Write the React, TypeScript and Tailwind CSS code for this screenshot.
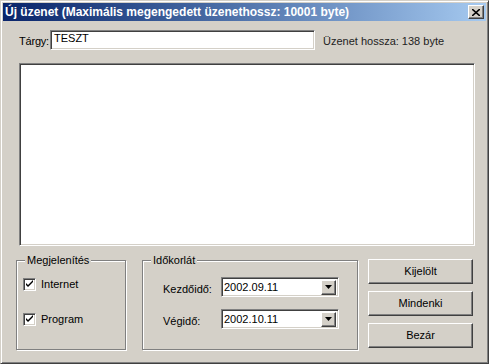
import React from "react";

const raised =
  "bg-[#d4d0c8] border border-t-white border-l-white border-r-[#404040] border-b-[#404040] shadow-[inset_-1px_-1px_0_#808080]";
const sunken =
  "bg-white border border-t-[#808080] border-l-[#808080] border-r-white border-b-white shadow-[inset_1px_1px_0_#404040,inset_-1px_-1px_0_#d4d0c8]";

function Check() {
  return (
    <div className={`w-[13px] h-[13px] ${sunken} flex items-center justify-center`}>
      <svg width="9" height="9" viewBox="0 0 9 9" className="block">
        <path d="M1 3 L1 5 L3 7 L8 2 L8 0 L3 5 Z" fill="#000" />
      </svg>
    </div>
  );
}

function Combo({ value }: { value: string }) {
  return (
    <div className={`w-[118px] h-[20px] ${sunken} flex items-center pl-[2px] pr-[2px]`}>
      <span className="flex-1 text-[11px] leading-[13px]">{value}</span>
      <div className={`w-[15px] h-[15px] ${raised} flex items-center justify-center`}>
        <svg width="7" height="4" viewBox="0 0 7 4" className="block">
          <path d="M0 0 H7 L3.5 4 Z" fill="#000" />
        </svg>
      </div>
    </div>
  );
}

function GroupBox({
  title,
  className,
  children,
}: {
  title: string;
  className: string;
  children: React.ReactNode;
}) {
  return (
    <div
      className={`relative border border-[#808080] shadow-[1px_1px_0_#fff,inset_1px_1px_0_#fff] ${className}`}
    >
      <span className="absolute left-[8px] -top-[7px] px-[2px] bg-[#d4d0c8] text-[11px] leading-[13px]">
        {title}
      </span>
      {children}
    </div>
  );
}

function Button({ label }: { label: string }) {
  return (
    <div
      className={`w-[105px] h-[25px] ${raised} flex items-center justify-center text-[11px] leading-[13px]`}
    >
      {label}
    </div>
  );
}

export default function App() {
  return (
    <div className="w-[489px] h-[364px] bg-[#d4d0c8] border border-t-[#d4d0c8] border-l-[#d4d0c8] border-r-[#404040] border-b-[#404040] shadow-[inset_1px_1px_0_#fff,inset_-1px_-1px_0_#808080] p-[2px] flex flex-col font-['Liberation_Sans',Arial,sans-serif] text-[11px] text-black overflow-hidden">
      {/* Title bar */}
      <div className="h-[18px] bg-gradient-to-r from-[#0a246a] to-[#a6caf0] flex items-center pl-[2px] pr-[2px]">
        <span className="text-white font-bold text-[12px] leading-[14px] whitespace-nowrap">
          Új üzenet (Maximális megengedett üzenethossz: 10001 byte)
        </span>
        <div className={`ml-auto w-[16px] h-[14px] ${raised} flex items-center justify-center`}>
          <svg width="8" height="7" viewBox="0 0 8 7" className="block">
            <path d="M0 0 L8 7 M8 0 L0 7" stroke="#000" strokeWidth="1.6" />
          </svg>
        </div>
      </div>

      {/* Subject row */}
      <div className="mt-[9px] flex items-center h-[20px]">
        <span className="ml-[16px] w-[31px] leading-[13px] pt-[3px] tracking-[-0.2px]">Tárgy:</span>
        <div className={`w-[265px] h-[20px] ${sunken} flex items-center pl-[3px]`}>
          <span className="leading-[13px] -mt-[4px]">TESZT</span>
        </div>
        <span className="ml-[8px] leading-[13px] pt-[3px] text-[#222]">Üzenet hossza: 138 byte</span>
      </div>

      {/* Message body */}
      <div className={`mt-[13px] ml-[16px] w-[456px] h-[183px] ${sunken}`} />

      {/* Bottom */}
      <div className="mt-[14px] flex items-start">
        <GroupBox title="Megjelenítés" className="ml-[13px] w-[110px] h-[90px]">
          <div className="flex flex-col pl-[6px] pt-[17px] gap-[22px]">
            <div className="flex items-center">
              <Check />
              <span className="ml-[5px] leading-[13px]">Internet</span>
            </div>
            <div className="flex items-center">
              <Check />
              <span className="ml-[5px] leading-[13px]">Program</span>
            </div>
          </div>
        </GroupBox>

        <GroupBox title="Időkorlát" className="ml-[16px] w-[216px] h-[90px]">
          <div className="flex flex-col pt-[16px] gap-[12px]">
            <div className="flex items-end">
              <span className="ml-[20px] w-[58px] leading-[13px] pb-[1px]">Kezdőidő:</span>
              <Combo value="2002.09.11" />
            </div>
            <div className="flex items-end">
              <span className="ml-[20px] w-[58px] leading-[13px] pb-[1px]">Végidő:</span>
              <Combo value="2002.10.11" />
            </div>
          </div>
        </GroupBox>

        <div className="ml-[10px] -mt-[1px] flex flex-col gap-[7px]">
          <Button label="Kijelölt" />
          <Button label="Mindenki" />
          <Button label="Bezár" />
        </div>
      </div>
    </div>
  );
}
